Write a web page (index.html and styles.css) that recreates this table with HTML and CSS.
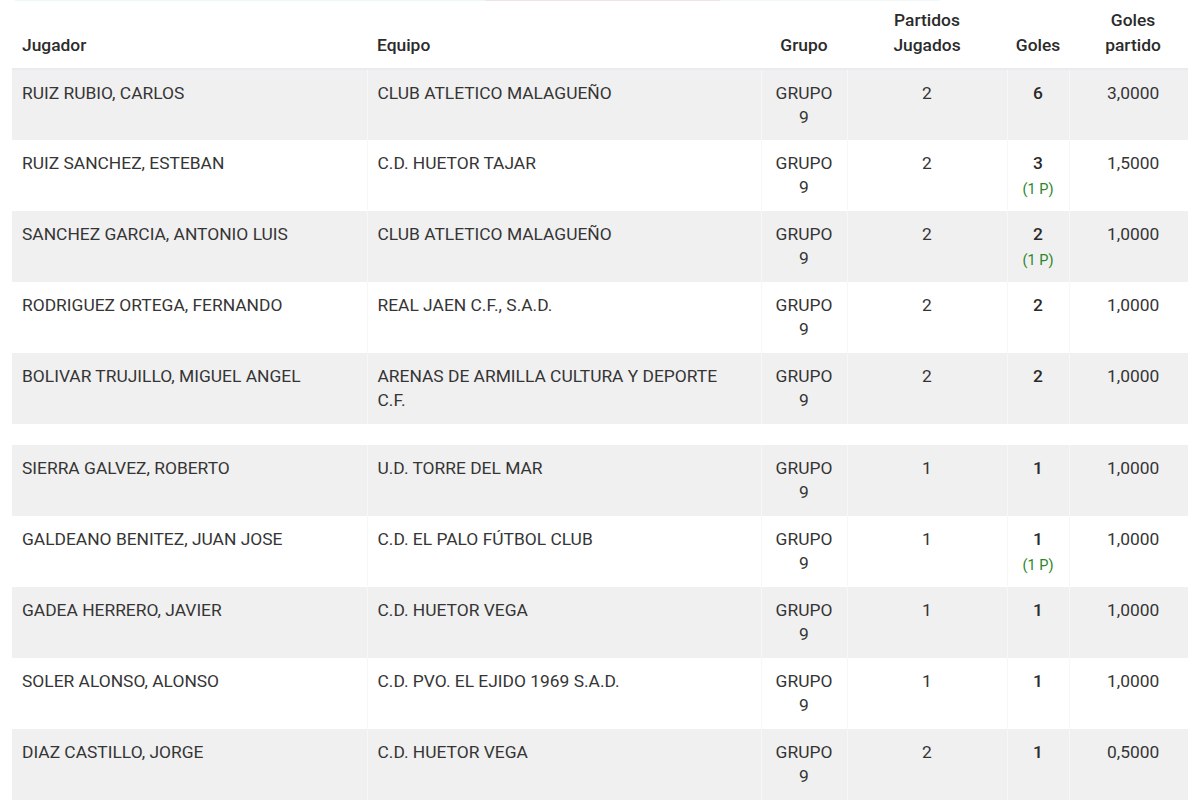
FILE: index.html
```html
<!DOCTYPE html>
<html lang="es">
<head>
<meta charset="utf-8">
<title>Goleadores</title>
<link rel="stylesheet" href="styles.css">
</head>
<body>
<div class="page">
  <div class="top-strip">
    <span class="seg seg-a"></span>
    <span class="seg seg-b"></span>
    <span class="seg seg-c"></span>
  </div>
  <div class="table-wrap">
    <table class="scorers">
      <colgroup>
        <col class="c-jug">
        <col class="c-equ">
        <col class="c-gru">
        <col class="c-par">
        <col class="c-gol">
        <col class="c-gpp">
      </colgroup>
      <thead>
        <tr>
          <th class="left">Jugador</th>
          <th class="left">Equipo</th>
          <th>Grupo</th>
          <th>Partidos<br>Jugados</th>
          <th>Goles</th>
          <th>Goles<br>partido</th>
        </tr>
      </thead>
      <tbody>
        <tr class="odd first">
          <td class="left">RUIZ RUBIO, CARLOS</td>
          <td class="left">CLUB ATLETICO MALAGUEÑO</td>
          <td class="grupo">GRUPO 9</td>
          <td>2</td>
          <td class="goles">6</td>
          <td>3,0000</td>
        </tr>
        <tr class="even">
          <td class="left">RUIZ SANCHEZ, ESTEBAN</td>
          <td class="left">C.D. HUETOR TAJAR</td>
          <td class="grupo">GRUPO 9</td>
          <td>2</td>
          <td class="goles has-pen">3<span class="pen">(1 P)</span></td>
          <td>1,5000</td>
        </tr>
        <tr class="odd">
          <td class="left">SANCHEZ GARCIA, ANTONIO LUIS</td>
          <td class="left">CLUB ATLETICO MALAGUEÑO</td>
          <td class="grupo">GRUPO 9</td>
          <td>2</td>
          <td class="goles has-pen">2<span class="pen">(1 P)</span></td>
          <td>1,0000</td>
        </tr>
        <tr class="even">
          <td class="left">RODRIGUEZ ORTEGA, FERNANDO</td>
          <td class="left">REAL JAEN C.F., S.A.D.</td>
          <td class="grupo">GRUPO 9</td>
          <td>2</td>
          <td class="goles">2</td>
          <td>1,0000</td>
        </tr>
        <tr class="odd">
          <td class="left">BOLIVAR TRUJILLO, MIGUEL ANGEL</td>
          <td class="left">ARENAS DE ARMILLA CULTURA Y DEPORTE C.F.</td>
          <td class="grupo">GRUPO 9</td>
          <td>2</td>
          <td class="goles">2</td>
          <td>1,0000</td>
        </tr>
        <tr class="spacer">
          <td colspan="6"></td>
        </tr>
        <tr class="odd">
          <td class="left">SIERRA GALVEZ, ROBERTO</td>
          <td class="left">U.D. TORRE DEL MAR</td>
          <td class="grupo">GRUPO 9</td>
          <td>1</td>
          <td class="goles">1</td>
          <td>1,0000</td>
        </tr>
        <tr class="even">
          <td class="left">GALDEANO BENITEZ, JUAN JOSE</td>
          <td class="left">C.D. EL PALO FÚTBOL CLUB</td>
          <td class="grupo">GRUPO 9</td>
          <td>1</td>
          <td class="goles has-pen">1<span class="pen">(1 P)</span></td>
          <td>1,0000</td>
        </tr>
        <tr class="odd">
          <td class="left">GADEA HERRERO, JAVIER</td>
          <td class="left">C.D. HUETOR VEGA</td>
          <td class="grupo">GRUPO 9</td>
          <td>1</td>
          <td class="goles">1</td>
          <td>1,0000</td>
        </tr>
        <tr class="even">
          <td class="left">SOLER ALONSO, ALONSO</td>
          <td class="left">C.D. PVO. EL EJIDO 1969 S.A.D.</td>
          <td class="grupo">GRUPO 9</td>
          <td>1</td>
          <td class="goles">1</td>
          <td>1,0000</td>
        </tr>
        <tr class="odd">
          <td class="left">DIAZ CASTILLO, JORGE</td>
          <td class="left">C.D. HUETOR VEGA</td>
          <td class="grupo">GRUPO 9</td>
          <td>2</td>
          <td class="goles">1</td>
          <td>0,5000</td>
        </tr>
      </tbody>
    </table>
  </div>
</div>
</body>
</html>
```

FILE: styles.css
```css
html, body {
  margin: 0;
  padding: 0;
  background: #ffffff;
  overflow: hidden;
}

body {
  font-family: Roboto, "Liberation Sans", Arial, sans-serif;
  font-size: 17.4px;
  color: #353535;
}

.page {
  width: 1188px;
  overflow: hidden;
}

.top-strip {
  display: flex;
  height: 1px;
  padding-left: 15px;
}

.seg { display: block; height: 1px; }
.seg-a { width: 470px; background: #eef7f7; }
.seg-b { width: 235px; background: #f2e3e7; }
.seg-c { width: 220px; background: #f0f8f8; }

.table-wrap {
  padding-left: 12px;
}

.scorers {
  border-collapse: collapse;
  table-layout: fixed;
  width: 1185px;
}

.c-jug { width: 355px; }
.c-equ { width: 394px; }
.c-gru { width: 86px; }
.c-par { width: 160px; }
.c-gol { width: 62px; }
.c-gpp { width: 128px; }

.scorers th {
  font-weight: 500;
  color: #2b2b2b;
  line-height: 25px;
  padding: 7px 2px 10px;
  text-align: center;
  vertical-align: bottom;
  border-bottom: 2px solid #e8ecef;
}

.scorers th.left {
  text-align: left;
  padding-left: 10px;
}

.scorers td {
  line-height: 24px;
  padding: 11px 2px 12px;
  text-align: center;
  vertical-align: top;
  border-left: 1px solid #f7f7f7;
}

.scorers td:first-child {
  border-left: none;
}

.scorers td.left {
  text-align: left;
  padding-left: 10px;
  padding-right: 12px;
}

.scorers td.grupo {
  padding-left: 10px;
  padding-right: 10px;
}

.scorers td.has-pen {
  padding-bottom: 9px;
}

.scorers tr.first td {
  padding-bottom: 11px;
}

.scorers tr.odd td {
  background: #f0f0f0;
}

.scorers tr.even td {
  background: #ffffff;
}

.scorers tr.spacer td {
  height: 21px;
  padding: 0;
  background: #ffffff;
  border: none;
}

.goles {
  font-weight: 500;
  color: #2a2a2a;
}

.pen {
  display: block;
  font-size: 14.5px;
  font-weight: 400;
  line-height: 24px;
  margin-top: 3px;
  color: #2b862b;
}
```
